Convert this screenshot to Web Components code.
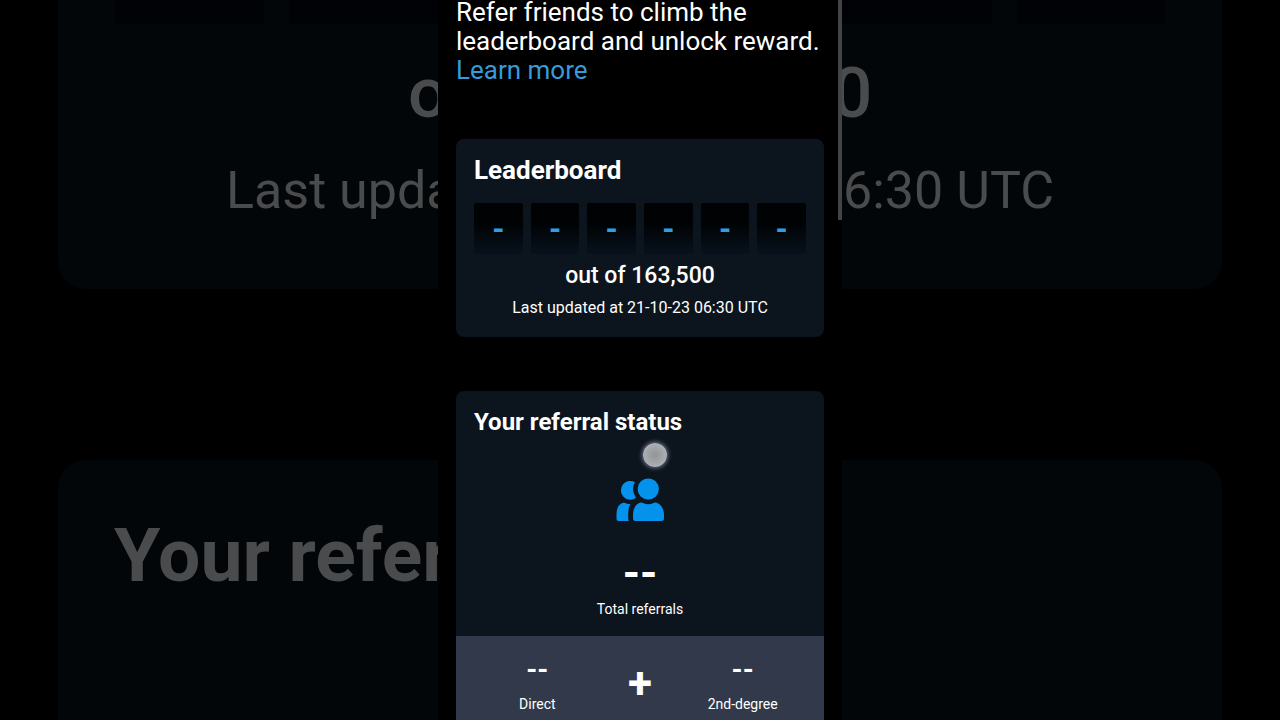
<!DOCTYPE html>
<html lang="en">
<head>
  <meta charset="UTF-8">
  <meta name="viewport" content="width=device-width, initial-scale=1.0">
  <title>Refer friends</title>
  <style>
    body {
      margin: 0;
      background: #000;
      color: #fff;
      font-family: Roboto, sans-serif;
    }
  </style>
</head>
<body>
  <referral-stage>
    <side-backdrop slot="left" side="left" aria-hidden="true">
      <span slot="total">o</span>
      <span slot="updated">Last upda</span>
      <span slot="title">Your refer</span>
    </side-backdrop>
    <phone-screen>
      <intro-text>
        Refer friends to climb the leaderboard and unlock reward.
        <a slot="link" href="#learn-more">Learn more</a>
      </intro-text>
      <leader-board total="163,500" updated="21-10-23 06:30 UTC"></leader-board>
      <referral-status>
        <stat-value slot="total" size="large" value="--">Total referrals</stat-value>
        <stat-value slot="direct" value="--">Direct</stat-value>
        <stat-value slot="second" value="--">2nd-degree</stat-value>
      </referral-status>
    </phone-screen>
    <side-backdrop slot="right" side="right" aria-hidden="true">
      <span slot="total">0</span>
      <span slot="updated">6:30 UTC</span>
    </side-backdrop>
  </referral-stage>

  <script>
    // the screen in the middle, a dimmed strip on each side
    class ReferralStage extends HTMLElement {
      constructor() {
        super();
        const shadow = this.attachShadow({ mode: "open" });
        shadow.innerHTML = `
          <style>
            :host {
              display: grid;
              grid-template: 100vh / minmax(0, 1fr) minmax(0, 404px) minmax(0, 1fr);
              overflow: hidden;
            }
            main {
              display: grid;
              min-height: 0;
            }
          </style>
          <slot name="left"></slot>
          <main><slot></slot></main>
          <slot name="right"></slot>
        `;
      }
    }
    customElements.define("referral-stage", ReferralStage);

    // enlarged cards that run on behind the screen
    class SideBackdrop extends HTMLElement {
      constructor() {
        super();
        const shadow = this.attachShadow({ mode: "open" });
        shadow.innerHTML = `
          <style>
            :host {
              display: flex;
              flex-direction: column;
              gap: 171px;
              min-width: 0;
              overflow: hidden;
              color: #4a4b4c;
              white-space: nowrap;
              --radius: 28px;
            }
            :host([side="left"]) {
              padding-left: 58px;
              --total-start: 350px;
              --updated-start: 168px;
            }
            :host([side="right"]) {
              padding-right: 58px;
              --total-start: -10px;
              --updated-start: 1px;
            }
            .card {
              background: #030609;
            }
            .first {
              padding-bottom: 66px;
            }
            .next {
              flex: 1;
              padding: 50px 0 0 56px;
            }
            :host([side="left"]) .first {
              border-bottom-left-radius: var(--radius);
            }
            :host([side="left"]) .next {
              border-top-left-radius: var(--radius);
            }
            :host([side="right"]) .first {
              border-bottom-right-radius: var(--radius);
            }
            :host([side="right"]) .next {
              border-top-right-radius: var(--radius);
            }
            .tiles {
              display: flex;
              gap: 25px;
              padding: 0 56px;
              margin-bottom: 27px;
            }
            :host([side="left"]) .tiles {
              padding-right: 0;
            }
            :host([side="right"]) .tiles {
              padding-left: 0;
            }
            .tiles span {
              flex: 1;
              height: 24px;
              background: #010206;
            }
            p {
              margin: 0;
            }
            .total {
              margin: 0 0 24px var(--total-start);
              font-size: 71px;
              line-height: 84px;
              font-weight: 500;
            }
            .updated {
              margin-left: var(--updated-start);
              font-size: 52px;
              line-height: 64px;
            }
            .title {
              font-size: 75px;
              line-height: 90px;
              font-weight: 700;
            }
          </style>
          <div class="card first">
            <div class="tiles"><span></span><span></span></div>
            <p class="total"><slot name="total"></slot></p>
            <p class="updated"><slot name="updated"></slot></p>
          </div>
          <div class="card next">
            <p class="title"><slot name="title"></slot></p>
          </div>
        `;
      }
    }
    customElements.define("side-backdrop", SideBackdrop);

    class PhoneScreen extends HTMLElement {
      constructor() {
        super();
        const shadow = this.attachShadow({ mode: "open" });
        shadow.innerHTML = `
          <style>
            :host {
              display: flex;
              flex-direction: column;
              gap: 54px;
              min-height: 0;
              padding: 0 18px;
              position: relative;
              background: #000;
              overflow: hidden;
            }
            /* scroll thumb, lies over the right edge */
            .thumb {
              position: absolute;
              top: 0;
              right: 0;
              width: 4px;
              height: 220px;
              background: #444;
            }
          </style>
          <slot></slot>
          <div class="thumb"></div>
        `;
      }
    }
    customElements.define("phone-screen", PhoneScreen);

    class IntroText extends HTMLElement {
      constructor() {
        super();
        const shadow = this.attachShadow({ mode: "open" });
        shadow.innerHTML = `
          <style>
            :host {
              display: block;
              flex: none;
              margin-top: -2px;
              font-size: 26px;
              line-height: 29px;
            }
            p {
              margin: 0;
            }
            ::slotted(a) {
              display: block;
              color: #359bdb;
              text-decoration: none;
            }
          </style>
          <p><slot></slot></p>
          <slot name="link"></slot>
        `;
      }
    }
    customElements.define("intro-text", IntroText);

    class LeaderBoard extends HTMLElement {
      constructor() {
        super();
        const shadow = this.attachShadow({ mode: "open" });
        shadow.innerHTML = `
          <style>
            :host {
              display: block;
              flex: none;
              padding: 16px 18px;
              border-radius: 8px;
              background: #0c141d;
              text-align: center;
            }
            h2 {
              margin: 0 0 18px;
              font-size: 26px;
              line-height: 30px;
              font-weight: 700;
              text-align: left;
            }
            .digits {
              display: grid;
              grid-template-columns: repeat(6, 1fr);
              gap: 8px;
              margin-bottom: 7px;
            }
            .digits span {
              padding-top: 2px;
              line-height: 49px;
              border-radius: 2px;
              background: linear-gradient(#000102, #000305 40%, #08111b);
              color: #2f9fe0;
              font-size: 31px;
              font-weight: 700;
            }
            p {
              margin: 0;
            }
            .total {
              font-size: 23px;
              line-height: 30px;
              font-weight: 500;
              margin-bottom: 4px;
            }
            .updated {
              font-size: 16px;
              line-height: 26px;
            }
          </style>
          <h2>Leaderboard</h2>
          <div class="digits"><span>-</span><span>-</span><span>-</span><span>-</span><span>-</span><span>-</span></div>
          <p class="total">out of ${this.getAttribute("total")}</p>
          <p class="updated">Last updated at ${this.getAttribute("updated")}</p>
        `;
      }
    }
    customElements.define("leader-board", LeaderBoard);

    class ReferralStatus extends HTMLElement {
      constructor() {
        super();
        const shadow = this.attachShadow({ mode: "open" });
        shadow.innerHTML = `
          <style>
            :host {
              display: block;
              flex: none;
              position: relative;
              border-radius: 8px;
              background: #0c141d;
              overflow: hidden;
            }
            .top {
              padding: 17px 18px 18px;
              text-align: center;
            }
            h2 {
              margin: 0 0 42px;
              font-size: 24px;
              line-height: 28px;
              font-weight: 700;
              text-align: left;
            }
            svg {
              display: block;
              margin: 0 auto 25px;
              fill: #0492ec;
            }
            .split {
              display: grid;
              grid-template-columns: repeat(3, 1fr);
              align-items: center;
              padding: 17px 30px;
              background: #31394b;
              text-align: center;
            }
            .plus {
              font-size: 44px;
              line-height: 56px;
              font-weight: 700;
            }
            /* touch pointer, lies over the card */
            .touch {
              position: absolute;
              top: 52px;
              left: calc(50% + 3px);
              width: 24px;
              height: 24px;
              border-radius: 50%;
              background: radial-gradient(#929594, #a9acb0 60%, #b9bcc6);
              box-shadow: 0 0 4px 1px #747792;
            }
          </style>
          <div class="top">
            <h2>Your referral status</h2>
            <svg width="48" height="43" viewBox="0 0 48 43" aria-hidden="true">
              <circle cx="32.3" cy="11" r="10.6"/>
              <path d="M19 4.2Q17 7 17 11Q17 15.5 20 19.8A9.4 9.4 0 1 1 19 4.2Z"/>
              <path d="M17 40V37C17 30.5 20 25.8 24.5 24.6Q26 24.3 27.5 25.2Q32.3 27.4 37 25.2Q38.5 24.3 40 24.6C44.5 25.8 48 30.5 48 37V40Q48 43 45.6 43H19.4Q17 43 17 40Z"/>
              <path d="M.5 40V36C.5 30 3 26 7 24.8Q9 24.6 10.5 25.4Q12.3 26.1 14.5 26C12.6 29 12.2 33 12.2 37V40Q12.2 42 12.8 43H2.5Q.5 43 .5 41Z"/>
            </svg>
            <slot name="total"></slot>
          </div>
          <div class="split">
            <slot name="direct"></slot>
            <span class="plus">+</span>
            <slot name="second"></slot>
          </div>
          <div class="touch"></div>
        `;
      }
    }
    customElements.define("referral-status", ReferralStatus);

    // a number with its label underneath
    class StatValue extends HTMLElement {
      constructor() {
        super();
        const shadow = this.attachShadow({ mode: "open" });
        shadow.innerHTML = `
          <style>
            :host {
              display: block;
              font-size: 14px;
              line-height: 18px;
            }
            .value {
              font-size: 28px;
              line-height: 34px;
              font-weight: 700;
              margin-bottom: 8px;
            }
            :host([size="large"]) .value {
              font-size: 44px;
              line-height: 54px;
              margin-bottom: 0;
            }
          </style>
          <div class="value">${this.getAttribute("value")}</div>
          <slot></slot>
        `;
      }
    }
    customElements.define("stat-value", StatValue);
  </script>
</body>
</html>
